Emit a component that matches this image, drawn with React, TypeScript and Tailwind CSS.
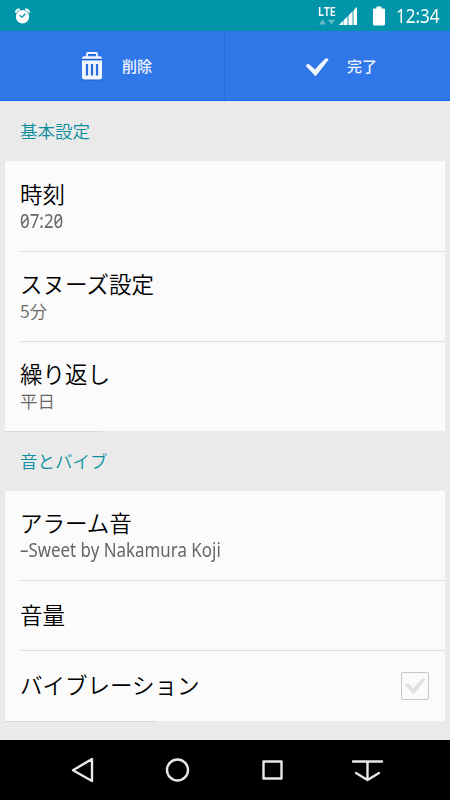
import type { ReactNode } from 'react';

interface RowProps {
  title: string;
  summary?: ReactNode;
  className: string;
  children?: ReactNode;
}

function AlarmIcon() {
  return (
    <svg width="16" height="16" viewBox="0 0 16 16" className="ml-[15px]" fill="none">
      <circle cx="7.5" cy="8.8" r="6.7" fill="#fff" />
      <path d="M.8 4.600Q1.300 1.500 4.800 1.200M14.200 4.600Q13.700 1.500 10.200 1.200" stroke="#fff" strokeWidth="2" />
      <path d="M4.600 7.200 7 9.200l3.500-3.400" stroke="#0095a8" strokeWidth="1.300" />
    </svg>
  );
}

function StatusBar() {
  return (
    <header className="flex h-[31px] items-center bg-[#0095a8] font-normal text-white">
      <AlarmIcon />
      <div className="ml-auto flex h-full w-[18px] flex-col">
        <span className="mt-[5px] h-[12px] origin-left scale-x-[.83] font-['Noto_Sans'] text-[13px] leading-[13px] font-semibold">LTE</span>
        <svg width="18" height="6" viewBox="0 0 18 6" className="mt-[2px]">
          <path d="M1 5.500 4.500.5 8 5.500zM10 .8h7L13.500 5.500z" fill="#65bcc8" />
        </svg>
      </div>
      <svg width="20" height="20" viewBox="0 0 20 20" className="ml-[2px]">
        <path d="M1 19 19 1v18z" fill="#8fcdd5" />
        <path d="M1 19 5 15v4zM6 14l3-3v8H6zM11 9l3-3v13h-3zM16 4l3-3v18h-3z" fill="#fff" />
      </svg>
      <svg width="12" height="20" viewBox="0 0 12 20" className="ml-[15px]">
        <path d="M3.500.5h5v2H11q1 0 1 1V18q0 1.500-1.500 1.500h-9Q0 19.500 0 18V3.500q0-1 1-1h2.500z" fill="#fff" />
      </svg>
      <span className="ml-[11px] w-[54px] origin-left scale-x-[.85] font-['Noto_Sans'] text-[20px] leading-[30px] whitespace-nowrap">12:34</span>
    </header>
  );
}

function TrashIcon() {
  return (
    <svg width="22" height="28" viewBox="0 0 22 28" className="drop-shadow-[0_1px_0_#1762c9]">
      <path d="M6 5V2q0-1 1-1h8q1 0 1 1v3" fill="none" stroke="#f0f4ff" strokeWidth="1.800" />
      <path d="M1 6.800V5.500L2.500 4.300h17L21 5.500v1.300z" fill="#f0f4ff" />
      <path d="M1 8.500h20v17q0 2-2 2H3q-2 0-2-2z" fill="#f0f4ff" />
      <path d="M6 12v11.500M11 12v11.500M16 12v11.500" stroke="#266bd9" strokeWidth="2.200" />
    </svg>
  );
}

function CheckIcon({ className }: { className?: string }) {
  return (
    <svg width="24" height="20" viewBox="0 0 24 20" className={className}>
      <path d="M1 8.500Q2.500 6 4.500 7.500L10 12.500Q15.500 6 20.500 1.500 23 .5 23.500 3 17 11.500 10.500 19.500 6 14.500 1.500 10z" fill="currentColor" />
    </svg>
  );
}

function ActionBar() {
  return (
    <div className="flex h-[70px] border-b border-[#086bea] bg-[#3078e9] font-['Noto_Sans_CJK_JP',sans-serif] text-[15px] leading-[22px] font-medium text-[#f0f4ff]">
      <button className="flex w-[225px] items-center border-r border-[#266ce0] pt-px pl-[81px]">
        <TrashIcon />
        <span className="ml-[19px]">削除</span>
      </button>
      <button className="flex flex-1 items-center pl-[80px]">
        <CheckIcon className="mt-[3px] drop-shadow-[0_1px_0_#1762c9]" />
        <span className="mt-px ml-[18px]">完了</span>
      </button>
    </div>
  );
}

function SectionTitle({ children }: { children: ReactNode }) {
  return <h2 className="flex h-[60px] items-center pb-px pl-5 text-[17.5px] leading-[26px] text-[#0b8f9f]">{children}</h2>;
}

function Latin({ children }: { children: ReactNode }) {
  return <span className="block w-max origin-left scale-x-[.89] pt-[2px] font-['Noto_Sans'] text-[19px] leading-[22px] font-[370] slashed-zero">{children}</span>;
}

function Row({ title, summary, className, children }: RowProps) {
  return (
    <div className={`ml-[15px] flex items-center justify-between border-[#dedede] ${className}`}>
      <div className={summary ? 'pb-[3px]' : 'pb-[4px]'}>
        <div className="text-[22.5px] leading-[30px] text-black">{title}</div>
        {summary && <div className="h-[24px] text-[17.5px] leading-[25px] whitespace-nowrap text-[#666]">{summary}</div>}
      </div>
      {children}
    </div>
  );
}

function NavBar() {
  return (
    <nav className="mt-auto flex h-[60px] items-center bg-black">
      <svg width="450" height="60" viewBox="0 0 450 60" fill="none" stroke="#e8e8e8" strokeWidth="2.400" strokeLinejoin="round" strokeLinecap="round">
        <path d="M92 19v22L73 30.200z" />
        <circle cx="177.500" cy="30" r="10.500" />
        <rect x="263.500" y="21.500" width="18" height="17" />
        <path d="M353 21.500h29M367.500 21.500V40M356 33l11.500 7 11.500-7" />
      </svg>
    </nav>
  );
}

export default function App() {
  return (
    <main className="flex h-[800px] w-[450px] flex-col overflow-hidden bg-[#eaeaea] font-['Noto_Sans_CJK_JP',sans-serif] font-[350]">
      <StatusBar />
      <ActionBar />
      <SectionTitle>基本設定</SectionTitle>
      <section className="mx-[5px] bg-[#fbfbfb]">
        <Row className="h-[90px]" title="時刻" summary={<Latin>07:20</Latin>} />
        <Row className="h-[90px] border-t" title="スヌーズ設定" summary="5分" />
        <Row className="h-[90px] border-t" title="繰り返し" summary="平日" />
      </section>
      <div className="-mb-px ml-[5px] h-px w-[98px] bg-[#dadada]" />
      <SectionTitle>音とバイブ</SectionTitle>
      <section className="mx-[5px] bg-[#fbfbfb]">
        <Row className="h-[89px]" title="アラーム音" summary={<Latin>–Sweet by Nakamura Koji</Latin>} />
        <Row className="h-[70px] border-t" title="音量" />
        <Row className="h-[71px] border-t" title="バイブレーション">
          <span className="mr-4 flex size-7 items-center justify-center rounded-[2px] border border-[#c6c6c6]">
            <CheckIcon className="h-[18px] w-[22px] text-[#e2e2e2]" />
          </span>
        </Row>
      </section>
      <div className="ml-[5px] h-px w-[150px] bg-[#dadada]" />
      <NavBar />
    </main>
  );
}
